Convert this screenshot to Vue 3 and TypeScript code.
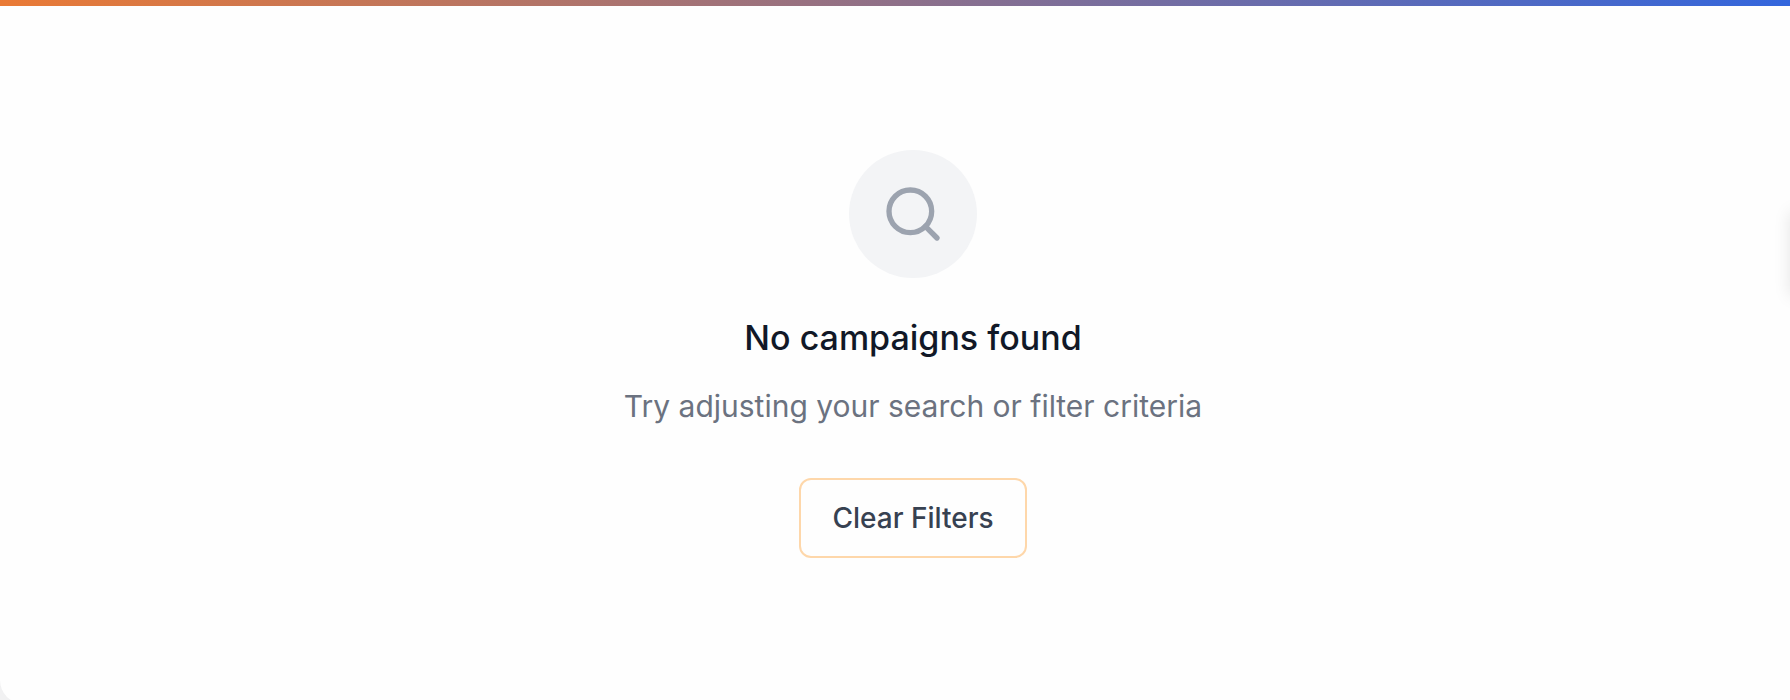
<script setup lang="ts">
import { ref } from 'vue'

const filters = ref<string[]>([])

function clearFilters(): void {
  filters.value = []
}
</script>

<template>
  <main class="page">
    <section class="card">
      <div class="accent"></div>
      <div class="empty">
        <div class="badge">
          <svg class="icon" viewBox="0 0 24 24" fill="none" stroke="currentColor" stroke-width="2" stroke-linecap="round" stroke-linejoin="round" aria-hidden="true">
            <circle cx="11" cy="11" r="8" />
            <path d="m21 21-4.35-4.35" />
          </svg>
        </div>
        <h3 class="title">No campaigns found</h3>
        <p class="hint">Try adjusting your search or filter criteria</p>
        <button class="clear" type="button" @click="clearFilters">Clear Filters</button>
      </div>
    </section>
    <div class="side-tab"></div>
  </main>
</template>

<style>
body {
  margin: 0;
}
</style>

<style scoped>
.page {
  position: relative;
  height: 100vh;
  overflow: hidden;
  background: #f1f1f2;
  font-family: Inter, "Liberation Sans", sans-serif;
}

.card {
  overflow: hidden;
  border-bottom-left-radius: 24px;
  background: #fefefe;
}

.accent {
  height: 6px;
  background: linear-gradient(to right, #ea7a35, #3366dd);
}

.empty {
  display: flex;
  flex-direction: column;
  align-items: center;
  padding: 144px 0 146px 36px;
}

.badge {
  display: flex;
  align-items: center;
  justify-content: center;
  width: 128px;
  height: 128px;
  border-radius: 50%;
  background: #f3f4f6;
}

.icon {
  width: 64px;
  height: 64px;
  color: #9ca3af;
}

.title {
  margin: 32px 0 16px;
  color: #111827;
  font-size: 34px;
  font-weight: 500;
  line-height: 56px;
}

.hint {
  margin: 0 0 48px;
  color: #6b7280;
  font-size: 30px;
  line-height: 48px;
}

.clear {
  height: 80px;
  padding: 0 31px;
  border: 2px solid #fed7aa;
  border-radius: 12px;
  background: #fefefe;
  color: #374151;
  font-family: inherit;
  font-size: 28px;
  font-weight: 500;
  line-height: 40px;
  cursor: pointer;
}

.side-tab {
  position: absolute;
  top: 212px;
  left: 100%;
  width: 96px;
  height: 84px;
  box-shadow: 0 0 16px rgba(0, 0, 0, 0.1);
}
</style>
